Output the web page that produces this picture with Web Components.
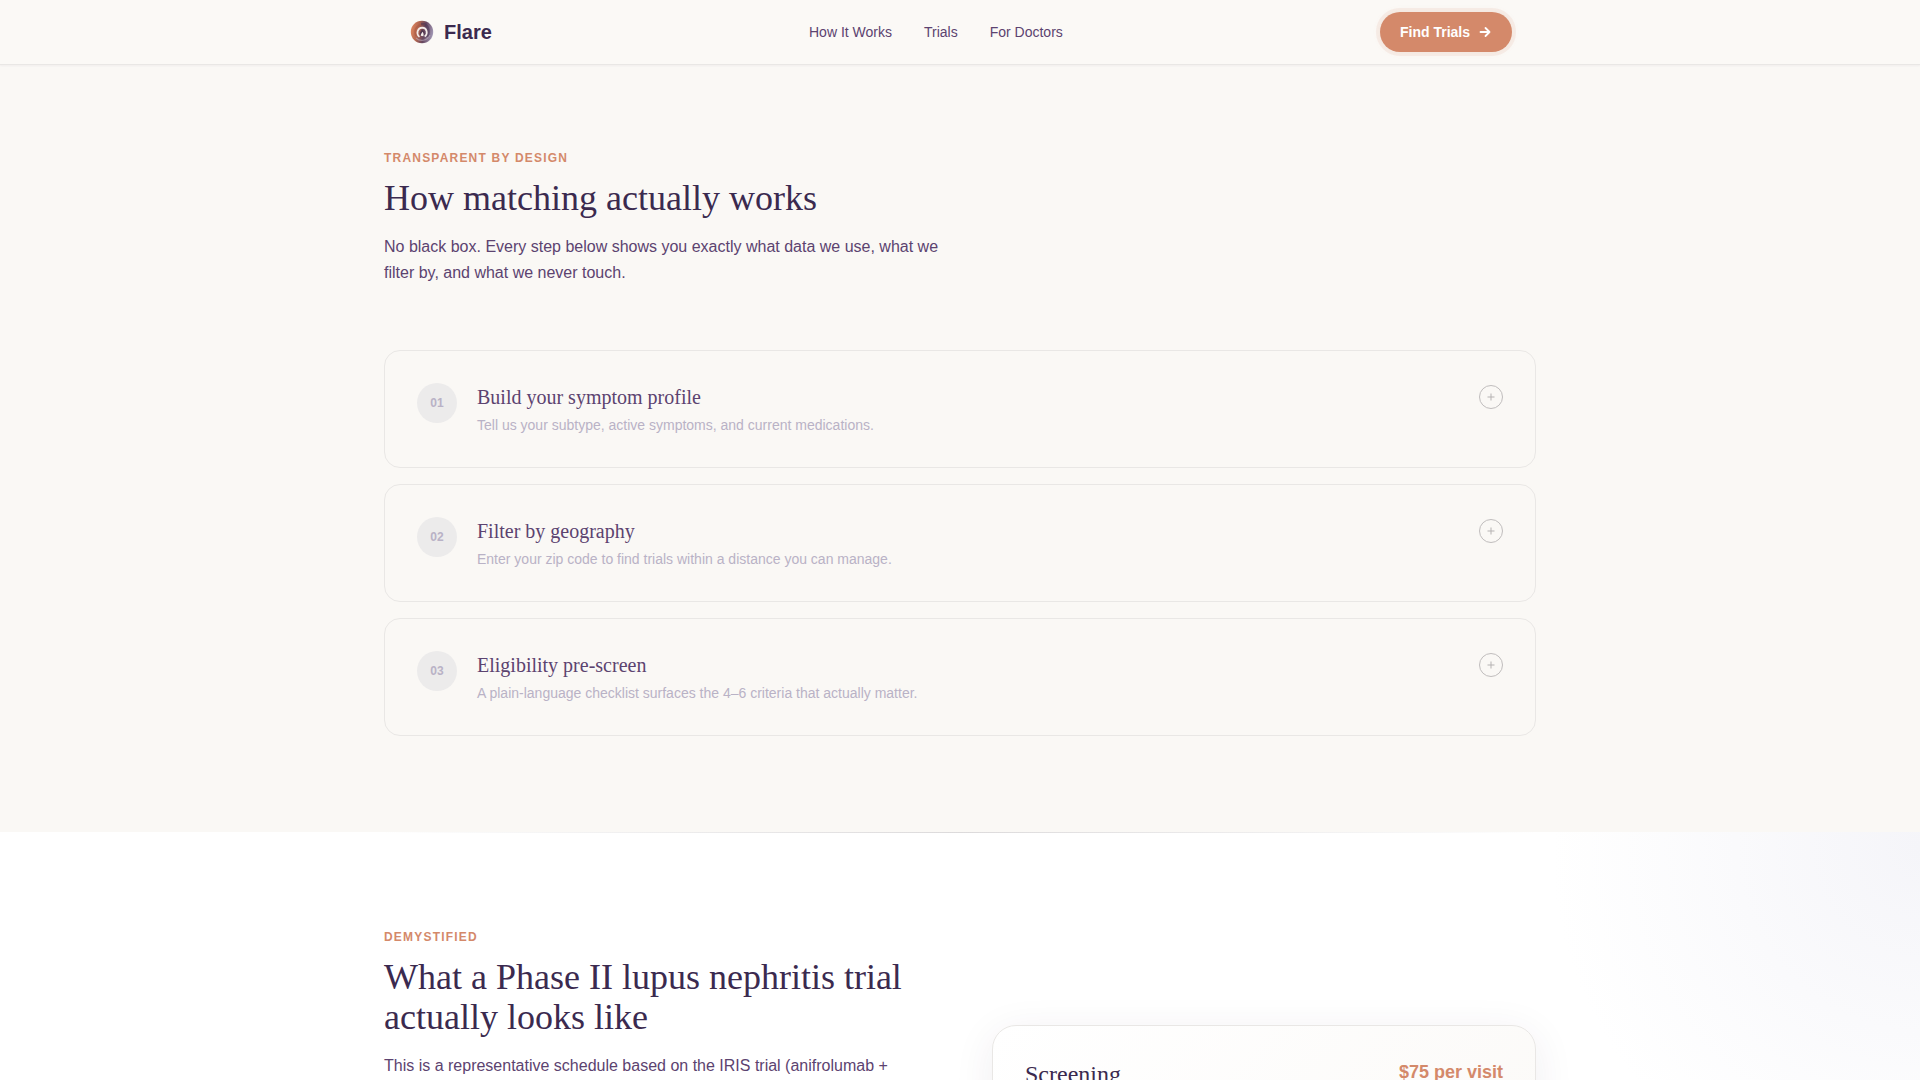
<!DOCTYPE html>
<html lang="en">
<head>
<meta charset="utf-8">
<title>Flare</title>
<style>
  :root {
    --cream: #faf8f5;
    --ink: #3b2a4f;
    --plum: #5c4370;
    --muted: #b9b2c6;
    --clay: #d4896a;
    --line: #e9e7e5;
    --serif: "Liberation Serif", serif;
    --sans: "Liberation Sans", sans-serif;
  }
  body { margin: 0; background: var(--cream); color: var(--plum); font-family: var(--sans); }
</style>
</head>
<body>
<flare-page>
  <flare-header slot="header"></flare-header>
  <flare-section>
    <section-intro eyebrow="TRANSPARENT BY DESIGN" heading="How matching actually works">No black box. Every step below shows you exactly what data we use, what we filter by, and what we never touch.</section-intro>
    <step-list>
      <step-card number="01" heading="Build your symptom profile">Tell us your subtype, active symptoms, and current medications.</step-card>
      <step-card number="02" heading="Filter by geography">Enter your zip code to find trials within a distance you can manage.</step-card>
      <step-card number="03" heading="Eligibility pre-screen">A plain-language checklist surfaces the 4–6 criteria that actually matter.</step-card>
    </step-list>
  </flare-section>
  <trial-section>
    <section-intro eyebrow="DEMYSTIFIED" heading="What a Phase II lupus nephritis trial actually looks like">This is a representative schedule based on the IRIS trial (anifrolumab +</section-intro>
    <visit-card slot="aside" heading="Screening" price="$75 per visit"></visit-card>
  </trial-section>
</flare-page>

<script>
  const define = (name, markup, fill) => {
    const template = document.createElement('template');
    template.innerHTML = '<style>*{box-sizing:border-box}</style>' + markup;
    customElements.define(name, class extends HTMLElement {
      connectedCallback() {
        if (this.shadowRoot) return;
        const root = this.attachShadow({ mode: 'open' });
        root.append(template.content.cloneNode(true));
        if (fill) fill(root, this);
      }
    });
  };
  const fillText = (...names) => (root, host) => {
    for (const n of names) root.querySelector('.' + n).textContent = host.getAttribute(n);
  };

  define('flare-page', `
    <style>
      :host { display: flex; flex-direction: column; height: 100vh; overflow: hidden; }
      main { flex: 1; min-height: 0; display: flex; flex-direction: column; }
    </style>
    <slot name="header"></slot>
    <main><slot></slot></main>`);

  define('flare-header', `
    <style>
      :host { display: block; flex: none; background: #fbf9f6; border-bottom: 1px solid #e9e7e5; box-shadow: 0 1px 2px rgba(54,37,82,.05); }
      .bar { max-width: 1152px; height: 64px; margin: 0 auto; padding: 0 24px; display: flex; align-items: center; justify-content: space-between; }
      a { color: inherit; text-decoration: none; }
      .brand { display: flex; align-items: center; gap: 8px; font-size: 20px; line-height: 28px; font-weight: 700; color: var(--ink); }
      .brand svg { display: block; }
      nav { display: flex; gap: 32px; font-size: 14px; line-height: 20px; }
      button { display: flex; align-items: center; gap: 8px; height: 40px; padding: 0 20px; border: 0; border-radius: 20px; background: var(--clay); color: #fff; font: 700 14px/20px var(--sans); box-shadow: 0 0 0 4px rgba(212,137,106,.1), 0 0 6px 2px rgba(212,137,106,.06); }
    </style>
    <div class="bar">
      <a class="brand" href="#">
        <svg width="28" height="28" viewBox="0 0 28 28" aria-hidden="true">
          <defs>
            <linearGradient id="ring" x1="0" y1="0.4" x2="1" y2="0.6">
              <stop offset="0" stop-color="#dc8560"/><stop offset=".3" stop-color="#b3664f"/><stop offset=".6" stop-color="#66465f"/><stop offset="1" stop-color="#a49bb8"/>
            </linearGradient>
          </defs>
          <circle cx="14" cy="14" r="11.200" fill="url(#ring)"/>
          <path d="M8 18C5 11 10 5 17 7" fill="none" stroke="#a8563f" stroke-width="1.500" opacity=".5"/>
          <path d="M13 6C20 5 22 12 19.500 19" fill="none" stroke="#493354" stroke-width="2.500" opacity=".55"/>
          <path d="M8 20C12 24 19 23 22 17" fill="none" stroke="#c9bccb" stroke-width="1.200" opacity=".5"/>
          <path d="M11 18.500C8 15.500 9.500 10 14.300 9.700C19 9.800 20 15.500 17.200 18" fill="none" stroke="#f4ece9" stroke-width="1.700" stroke-linecap="round"/>
          <path d="M14 11C15.500 13 17 14 16.500 16.500C16 18.800 12.200 18.800 11.800 16.200C11.500 14 13.800 13 14 11Z" fill="#51364f"/>
          <path d="M12.700 17.800C12.800 15.500 14 15.500 14.300 13.800C15.800 15.200 15.800 17 15.300 18.200Z" fill="#f6eeeb"/>
        </svg>
        <span>Flare</span>
      </a>
      <nav><a href="#how">How It Works</a><a href="#trials">Trials</a><a href="#doctors">For Doctors</a></nav>
      <button type="button">Find Trials
        <svg width="14" height="14" viewBox="0 0 14 14" fill="none" stroke="#fff" stroke-width="1.800" stroke-linecap="round" stroke-linejoin="round" aria-hidden="true"><path d="M2.500 7h9M7.500 3l4 4-4 4"/></svg>
      </button>
    </div>`);

  define('flare-section', `
    <style>
      :host { display: block; flex: none; padding: 85px 24px 96px; }
      .wrap { max-width: 1152px; margin: 0 auto; display: flex; flex-direction: column; gap: 64px; }
    </style>
    <section class="wrap"><slot></slot></section>`);

  define('section-intro', `
    <style>
      :host { display: block; }
      .eyebrow { margin: 0 0 12px; font-size: 12px; line-height: 16px; font-weight: 700; letter-spacing: 1.2px; color: var(--clay); }
      h2 { margin: 0 0 16px; font: 400 36px/40px var(--serif); color: var(--ink); }
      .body { margin: 0; max-width: 576px; font-size: 16px; line-height: 26px; }
    </style>
    <p class="eyebrow"></p><h2 class="heading"></h2><p class="body"><slot></slot></p>`, fillText('eyebrow', 'heading'));

  define('step-list', `
    <style>:host { display: flex; flex-direction: column; gap: 16px; }</style><slot></slot>`);

  define('step-card', `
    <style>
      :host { display: block; border: 1px solid var(--line); border-radius: 16px; padding: 32px; }
      .row { display: flex; align-items: flex-start; gap: 20px; }
      .number { flex: none; width: 40px; height: 40px; border-radius: 50%; background: #ecebeb; color: var(--muted); display: grid; place-items: center; font-size: 12px; line-height: 16px; font-weight: 700; }
      .copy { flex: 1; }
      h3 { margin: 0 0 4px; font: 400 20px/28px var(--serif); color: var(--plum); }
      p { margin: 0; font-size: 14px; line-height: 20px; color: var(--muted); }
      button { flex: none; width: 24px; height: 24px; margin: 2px 0 0; padding: 0; border: 1px solid #c0bdbd; border-radius: 50%; background: none; display: grid; place-items: center; }
    </style>
    <div class="row">
      <span class="number"></span>
      <div class="copy"><h3 class="heading"></h3><p><slot></slot></p></div>
      <button type="button" aria-label="Expand step"><svg width="8" height="8" viewBox="0 0 8 8" stroke="#b5b2b2" aria-hidden="true"><path d="M.5 4h7M4 .5v7"/></svg></button>
    </div>`, fillText('number', 'heading'));

  define('trial-section', `
    <style>
      :host { display: block; flex: 1; min-height: 0; padding: 0 24px; background: radial-gradient(circle 400px at 100% 16px, #f5f5f9, #fff 92%) #fff; }
      hr { max-width: 1152px; height: 1px; margin: 0 auto 96px; border: 0; background: linear-gradient(90deg, transparent, #dcdadb, transparent); }
      .wrap { max-width: 1152px; margin: 0 auto; display: grid; grid-template-columns: 1fr 1fr; gap: 64px; }
      .aside { padding-top: 96px; }
    </style>
    <hr>
    <section class="wrap"><div><slot></slot></div><div class="aside"><slot name="aside"></slot></div></section>`);

  define('visit-card', `
    <style>
      :host { display: block; min-height: 320px; padding: 32px; border: 1px solid var(--line); border-radius: 24px; background: linear-gradient(135deg, #fff, #faf8f5); box-shadow: 0 8px 40px rgba(59,42,79,.08); }
      .row { display: flex; align-items: flex-start; justify-content: space-between; }
      h3 { margin: 0; font: 400 24px/32px var(--serif); color: var(--ink); }
      .price { font-size: 18px; line-height: 28px; font-weight: 700; color: var(--clay); }
    </style>
    <div class="row"><h3 class="heading"></h3><span class="price"></span></div>`, fillText('heading', 'price'));
</script>
</body>
</html>
